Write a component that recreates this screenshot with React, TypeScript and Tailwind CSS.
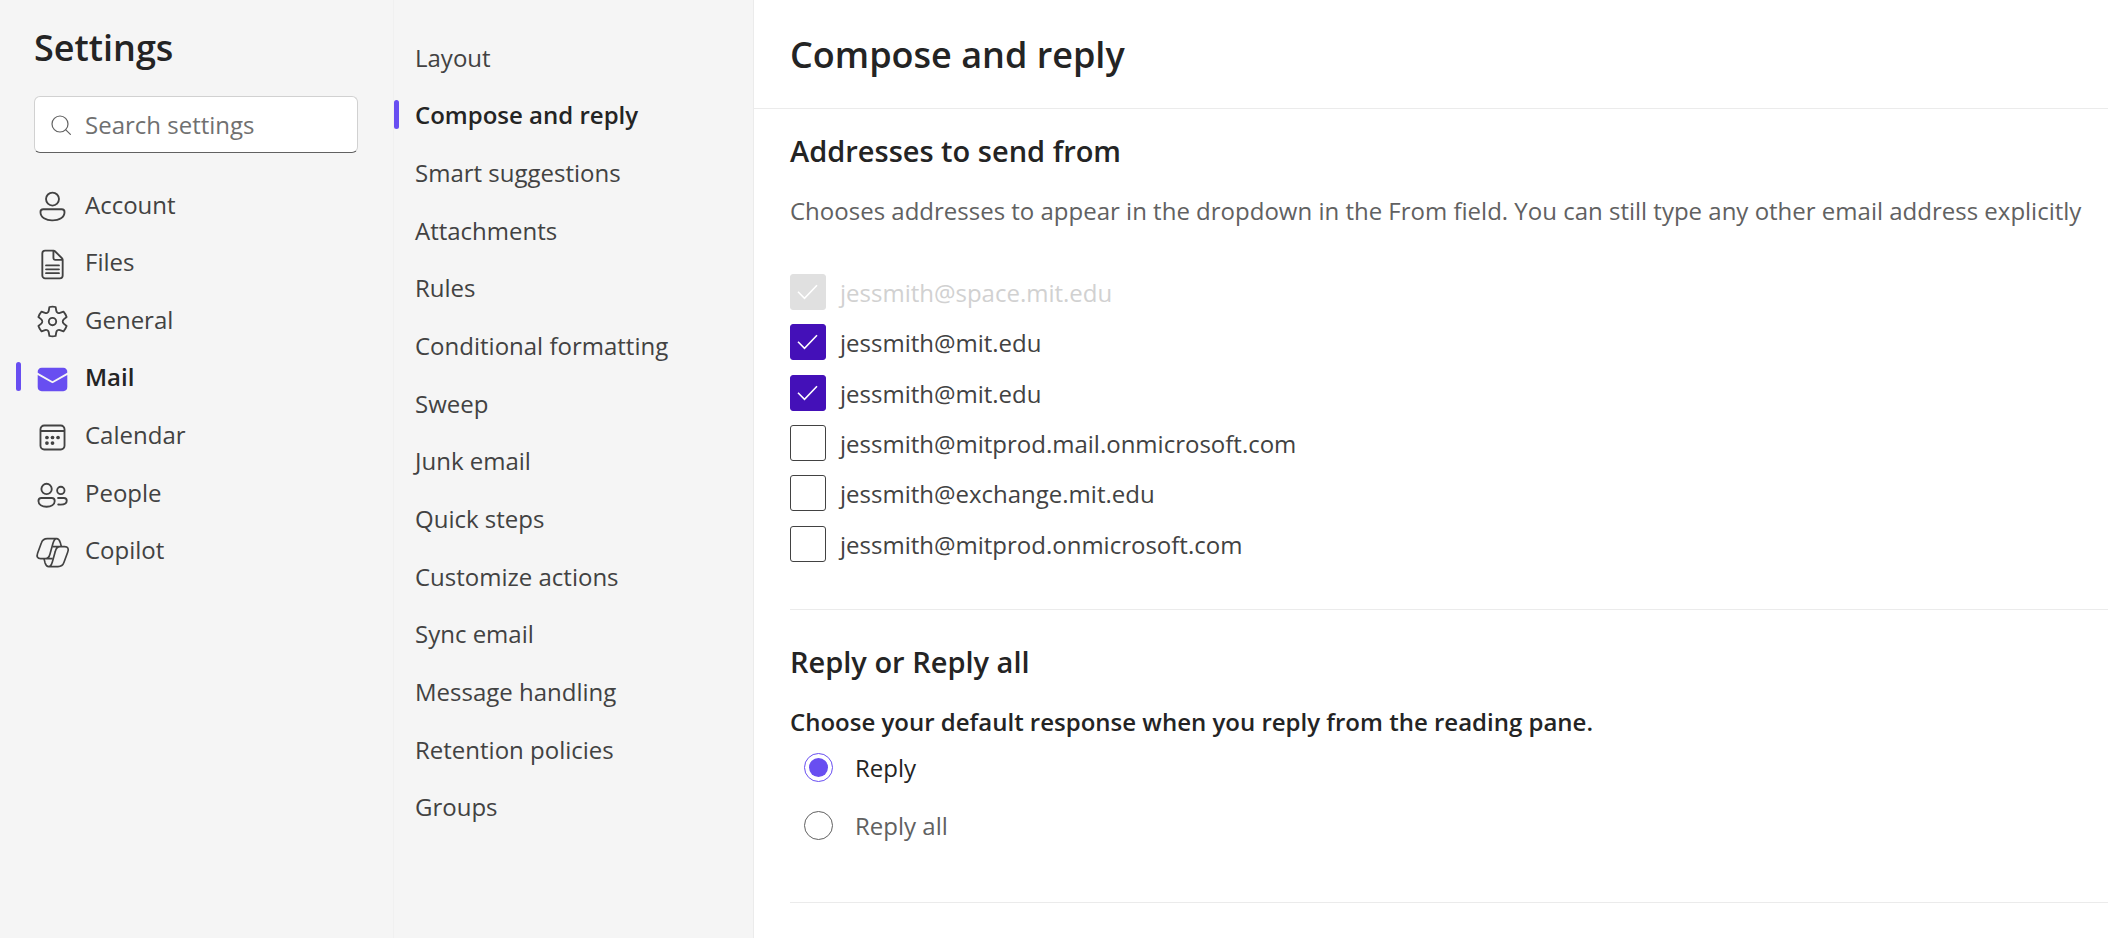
import React, { useState } from 'react';

const CATEGORIES = ['Account', 'Files', 'General', 'Mail', 'Calendar', 'People', 'Copilot'];

const PAGES = [
  'Layout',
  'Compose and reply',
  'Smart suggestions',
  'Attachments',
  'Rules',
  'Conditional formatting',
  'Sweep',
  'Junk email',
  'Quick steps',
  'Customize actions',
  'Sync email',
  'Message handling',
  'Retention policies',
  'Groups',
];

interface Address {
  id: string;
  email: string;
  checked: boolean;
  disabled?: boolean;
}

const INITIAL_ADDRESSES: Address[] = [
  { id: 'addr-1', email: 'jessmith@space.mit.edu', checked: true, disabled: true },
  { id: 'addr-2', email: 'jessmith@mit.edu', checked: true },
  { id: 'addr-3', email: 'jessmith@mit.edu', checked: true },
  { id: 'addr-4', email: 'jessmith@mitprod.mail.onmicrosoft.com', checked: false },
  { id: 'addr-5', email: 'jessmith@exchange.mit.edu', checked: false },
  { id: 'addr-6', email: 'jessmith@mitprod.onmicrosoft.com', checked: false },
];

// one half of the Copilot mark, drawn twice with a half turn between
const RIBBON =
  'M168 714H140C130 714 125 718 122 727L111 757C107 768 110 774 120 774H134C142 774 146 768 148 760L157 728C160 718 162 714 168 714ZC174 714 177 720 179 726L182 738M134 774H156';

const CategoryIcon: React.FC<{ name: string }> = ({ name }) => {
  const cls = 'w-[37px] h-[37px] mt-1.5 shrink-0';
  switch (name) {
    case 'Account':
      return (
        <svg viewBox="0 0 20 20" fill="currentColor" className={cls} aria-hidden="true">
          <path d="M10 2a4 4 0 1 0 0 8 4 4 0 0 0 0-8ZM7 6a3 3 0 1 1 6 0 3 3 0 0 1-6 0Zm-2 5a2 2 0 0 0-2 2c0 1.7.83 2.97 2.13 3.8A9.14 9.14 0 0 0 10 18c1.85 0 3.58-.39 4.87-1.2A4.35 4.35 0 0 0 17 13a2 2 0 0 0-2-2H5Zm-1 2a1 1 0 0 1 1-1h10a1 1 0 0 1 1 1c0 1.3-.62 2.28-1.67 2.95A8.16 8.16 0 0 1 10 17a8.16 8.16 0 0 1-4.33-1.05A3.36 3.36 0 0 1 4 13Z" />
        </svg>
      );
    case 'Files':
      return (
        <svg viewBox="0 0 20 20" fill="currentColor" className={cls} aria-hidden="true">
          <path d="M6 2a2 2 0 0 0-2 2v12c0 1.1.9 2 2 2h8a2 2 0 0 0 2-2V7.41c0-.4-.16-.78-.44-1.06l-3.91-3.91A1.5 1.5 0 0 0 10.59 2H6ZM5 4a1 1 0 0 1 1-1h4v3.5c0 .83.67 1.5 1.5 1.5H15v8a1 1 0 0 1-1 1H6a1 1 0 0 1-1-1V4Zm9.8 3h-3.3a.5.5 0 0 1-.5-.5V3.2L14.8 7Z" />
          <path d="M6.5 10.5h7M6.5 12.6h7M6.5 14.7h7" stroke="currentColor" strokeWidth="1" strokeLinecap="round" />
        </svg>
      );
    case 'General':
      return (
        <svg viewBox="0 0 20 20" fill="currentColor" className={cls} aria-hidden="true">
          <path d="M1.91 7.38A8.5 8.5 0 0 1 3.7 4.3a.5.5 0 0 1 .54-.13l1.92.68a1 1 0 0 0 1.32-.76l.36-2a.5.5 0 0 1 .4-.4 8.53 8.53 0 0 1 3.55 0c.2.04.35.2.38.4l.37 2a1 1 0 0 0 1.32.76l1.92-.68a.5.5 0 0 1 .54.13 8.5 8.5 0 0 1 1.78 3.08c.06.2 0 .4-.15.54l-1.56 1.32a1 1 0 0 0 0 1.52l1.56 1.32a.5.5 0 0 1 .15.54 8.5 8.5 0 0 1-1.78 3.08.5.5 0 0 1-.54.13l-1.92-.68a1 1 0 0 0-1.32.76l-.37 2a.5.5 0 0 1-.38.4 8.53 8.53 0 0 1-3.56 0 .5.5 0 0 1-.39-.4l-.36-2a1 1 0 0 0-1.32-.76l-1.92.68a.5.5 0 0 1-.54-.13 8.5 8.5 0 0 1-1.78-3.08.5.5 0 0 1 .15-.54l1.56-1.32a1 1 0 0 0 0-1.52L2.06 7.92a.5.5 0 0 1-.15-.54Zm1.06 0 1.3 1.1a2 2 0 0 1 0 3.04l-1.3 1.1c.3.79.72 1.51 1.25 2.16l1.6-.58a2 2 0 0 1 2.63 1.53l.3 1.67a7.56 7.56 0 0 0 2.5 0l.3-1.67a2 2 0 0 1 2.64-1.53l1.6.57a7.5 7.5 0 0 0 1.24-2.15l-1.3-1.1a2 2 0 0 1 0-3.04l1.3-1.1a7.5 7.5 0 0 0-1.25-2.16l-1.6.57a2 2 0 0 1-2.63-1.52l-.3-1.67a7.55 7.55 0 0 0-2.5 0l-.3 1.67A2 2 0 0 1 5.81 5.8l-1.6-.57a7.5 7.5 0 0 0-1.24 2.15ZM7.5 10a2.5 2.5 0 1 1 5 0 2.5 2.5 0 0 1-5 0Zm1 0a1.5 1.5 0 1 0 3 0 1.5 1.5 0 0 0-3 0Z" />
        </svg>
      );
    case 'Mail':
      return (
        <svg viewBox="0 0 20 20" fill="#684ef1" className={cls} aria-hidden="true">
          <path d="M18 7.5v6.6a2.2 2.2 0 0 1-2.2 2.2H4.2A2.2 2.2 0 0 1 2 14.1V7.5l7.75 4.4c.16.09.35.09.5 0L18 7.5ZM4.2 3.7h11.6a2.2 2.2 0 0 1 2.18 2.6L10 10.9 2.02 6.3A2.2 2.2 0 0 1 4.2 3.7Z" />
        </svg>
      );
    case 'Calendar':
      return (
        <svg viewBox="0 0 20 20" fill="currentColor" className={cls} aria-hidden="true">
          <path d="M5.5 3A2.5 2.5 0 0 0 3 5.5v9A2.5 2.5 0 0 0 5.5 17h9a2.5 2.5 0 0 0 2.5-2.5v-9A2.5 2.5 0 0 0 14.5 3h-9ZM4 7h12v7.5c0 .83-.67 1.5-1.5 1.5h-9A1.5 1.5 0 0 1 4 14.5V7Zm1.5-3h9c.83 0 1.5.67 1.5 1.5V6H4v-.5C4 4.67 4.67 4 5.5 4Z" />
          <circle cx="7" cy="10" r="1" />
          <circle cx="10" cy="10" r="1" />
          <circle cx="13" cy="10" r="1" />
          <circle cx="7" cy="13" r="1" />
          <circle cx="10" cy="13" r="1" />
        </svg>
      );
    case 'People':
      return (
        <svg viewBox="0 0 20 20" fill="none" stroke="currentColor" strokeLinecap="round" className={cls} aria-hidden="true">
          <circle cx="6.8" cy="7" r="2.8" />
          <circle cx="14.5" cy="7.8" r="2" />
          <path d="M4 11.9h5.6a1.6 1.6 0 0 1 1.6 1.6c0 2-2 3.1-4.4 3.1s-4.4-1.1-4.4-3.1A1.6 1.6 0 0 1 4 11.9Z" />
          <path d="M13 11.9h3.2a1.5 1.5 0 0 1 1.5 1.5c0 1.5-1.5 2.1-3.3 2.1-.5 0-.9 0-1.3-.1" />
        </svg>
      );
    default:
      return (
        <svg viewBox="100 700 111 111" fill="none" stroke="currentColor" strokeWidth="5" strokeLinejoin="round" className={cls} aria-hidden="true">
          <path d={RIBBON} />
          <path d={RIBBON} transform="rotate(180 156 756)" />
        </svg>
      );
  }
};

const App: React.FC = () => {
  const [category, setCategory] = useState('Mail');
  const [page, setPage] = useState('Compose and reply');
  const [addresses, setAddresses] = useState(INITIAL_ADDRESSES);
  const [response, setResponse] = useState('Reply');

  const toggleAddress = (id: string) => {
    setAddresses(prev => prev.map(a => (a.id === id ? { ...a, checked: !a.checked } : a)));
  };

  return (
    <div className="flex min-h-screen bg-white font-['Open_Sans',sans-serif] text-[24px] leading-8 text-[#424242]">
      <aside className="w-[394px] shrink-0 bg-[#f5f5f5] border-r border-[#f0f0f0]">
        <h1 className="pt-6 pl-[34px] text-[36px] leading-12 font-semibold text-[#242424]">Settings</h1>

        <label className="mt-6 ml-[34px] mr-[35px] h-[57px] flex items-center gap-[14px] pl-4 pr-3 bg-white rounded-md border border-[#d1d1d1] border-b-[#616161]">
          <svg viewBox="0 0 20 20" fill="none" stroke="#616161" strokeWidth="1.2" strokeLinecap="round" className="w-5 h-5 shrink-0" aria-hidden="true">
            <circle cx="9" cy="9" r="8" />
            <path d="M14.8 14.8l4.6 4.6" />
          </svg>
          <input
            type="text"
            aria-label="Search settings"
            placeholder="Search settings"
            className="w-full min-w-0 bg-transparent outline-none placeholder:text-[#707070]"
          />
        </label>

        <ul className="mt-[22px] grid auto-rows-fr min-h-[403px]">
          {CATEGORIES.map(name => (
            <li key={name} className="flex">
              <button
                onClick={() => setCategory(name)}
                className={`w-full flex items-center pl-4 text-left ${category === name ? 'font-semibold text-[#242424]' : ''}`}
              >
                <span className={`w-[5px] h-[29px] mr-[13px] rounded-full ${category === name ? 'bg-[#684ef1]' : ''}`}></span>
                <CategoryIcon name={name} />
                <span className="ml-[14px] pt-0.5">{name}</span>
              </button>
            </li>
          ))}
        </ul>
      </aside>

      <nav className="w-[360px] shrink-0 bg-[#f5f5f5] border-r border-[#ebebeb] pt-7">
        <ul className="grid auto-rows-fr min-h-[807px]">
          {PAGES.map(name => (
            <li key={name} className="flex">
              <button
                onClick={() => setPage(name)}
                className={`w-full flex items-center text-left ${page === name ? 'font-semibold text-[#242424]' : ''}`}
              >
                <span className={`w-[5px] h-[29px] mr-4 rounded-full ${page === name ? 'bg-[#684ef1]' : ''}`}></span>
                <span className="pt-0.5">{name}</span>
              </button>
            </li>
          ))}
        </ul>
      </nav>

      <main className="flex-1 min-w-0">
        <header className="h-[109px] pl-9 pt-0.5 flex items-center border-b border-[#ebebeb]">
          <h2 className="text-[36px] leading-12 font-semibold text-[#242424]">Compose and reply</h2>
        </header>

        <div className="pl-9">
          <section className="pt-[22px] pb-10 border-b border-[#ebebeb]">
            <h3 className="text-[29px] leading-10 font-semibold text-[#242424]">Addresses to send from</h3>
            <p className="mt-6 text-[#616161]">
              Chooses addresses to appear in the dropdown in the From field. You can still type any other email address explicitly
            </p>
            <ul className="mt-10 grid auto-rows-fr min-h-[302px]">
              {addresses.map(a => (
                <li key={a.id} className="flex items-center">
                  <span className="grid shrink-0">
                    <input
                      id={a.id}
                      type="checkbox"
                      checked={a.checked}
                      disabled={a.disabled}
                      onChange={() => toggleAddress(a.id)}
                      className="[grid-area:1/1] appearance-none w-9 h-9 rounded-[3px] border border-[#424242] bg-white checked:bg-[#4410b8] checked:border-[#4410b8] disabled:bg-[#e0e0e0] disabled:border-[#e0e0e0]"
                    />
                    {a.checked && (
                      <svg viewBox="0 0 36 36" fill="none" stroke="#fff" strokeWidth="1.6" className="[grid-area:1/1] w-9 h-9 pointer-events-none" aria-hidden="true">
                        <path d="M8 17.8l6.5 6.5L27 11.300" />
                      </svg>
                    )}
                  </span>
                  <label htmlFor={a.id} className={`pl-[14px] pt-0.5 ${a.disabled ? 'text-[#d1d1d1]' : ''}`}>
                    {a.email}
                  </label>
                </li>
              ))}
            </ul>
          </section>

          <section className="pt-8 pb-12 border-b border-[#ebebeb]">
            <h3 className="text-[29px] leading-10 font-semibold text-[#242424]">Reply or Reply all</h3>
            <fieldset className="mt-6">
              <legend className="font-semibold text-[#242424]">
                Choose your default response when you reply from the reading pane.
              </legend>
              {['Reply', 'Reply all'].map(option => (
                <label key={option} className={`h-[58px] pl-3.5 flex items-center gap-[22px] ${response === option ? 'text-[#242424]' : 'text-[#616161]'}`}>
                  <input
                    type="radio"
                    name="default-response"
                    checked={response === option}
                    onChange={() => setResponse(option)}
                    className="appearance-none w-[29px] h-[29px] rounded-full border border-[#616161] bg-white bg-clip-content p-1 checked:border-[#684ef1] checked:bg-[#684ef1]"
                  />
                  <span className="pt-0.5">{option}</span>
                </label>
              ))}
            </fieldset>
          </section>
        </div>
      </main>
    </div>
  );
};

export default App;
